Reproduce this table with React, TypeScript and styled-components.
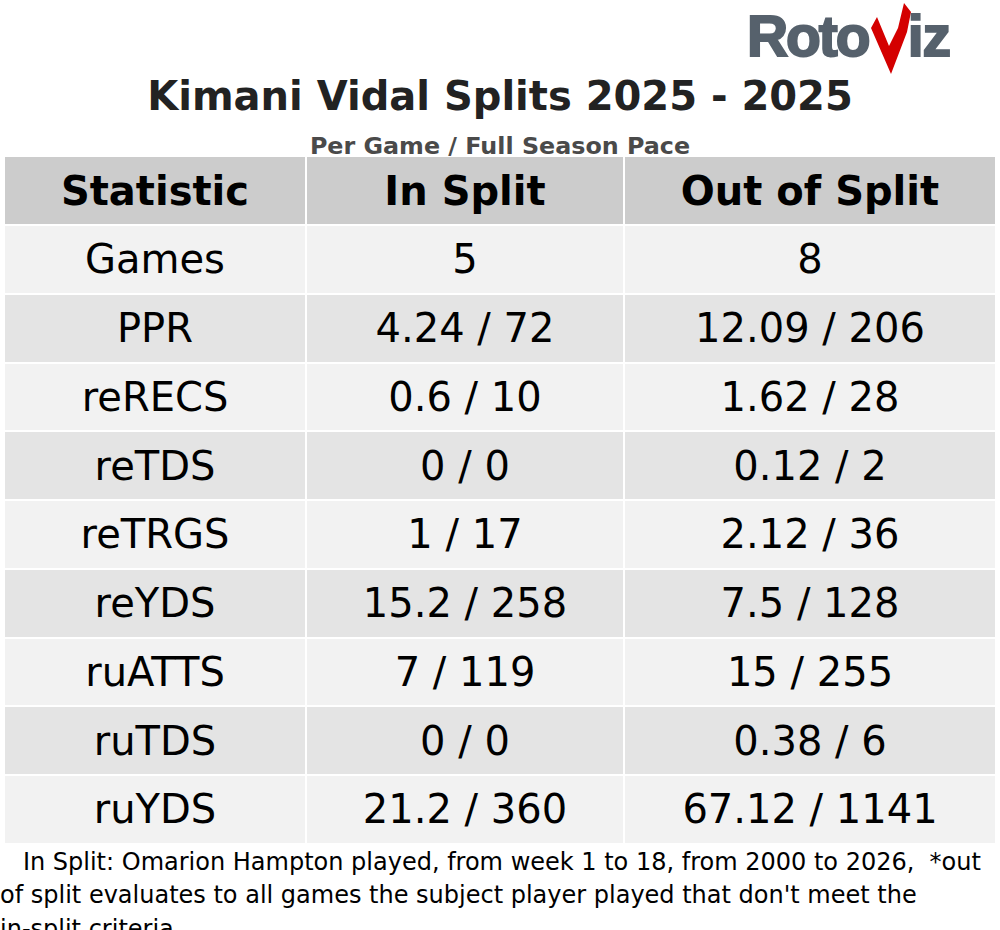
import * as React from "react";
import styled, { createGlobalStyle } from "styled-components";

const GlobalStyle = createGlobalStyle`
  html, body {
    margin: 0;
    padding: 0;
    background: #ffffff;
  }
  body {
    font-family: "DejaVu Sans", "Liberation Sans", sans-serif;
    color: #000;
  }
`;

const Page = styled.div`
  width: 1000px;
  height: 930px;
  overflow: hidden;
  display: flex;
  flex-direction: column;

  & > * {
    flex-shrink: 0;
  }
`;

const LogoRow = styled.div`
  height: 68px;
  display: flex;
  justify-content: flex-end;
  align-items: flex-start;
  padding-right: 50px;
  box-sizing: border-box;
`;

const Logo = styled.div`
  display: flex;
  align-items: flex-start;
  height: 66px;
  font-family: "Liberation Sans", Arial, sans-serif;
  font-weight: 700;
  font-size: 57px;
  line-height: 1;
  color: #56616c;
  -webkit-text-stroke: 2px #56616c;
`;

const LogoWord = styled.span<{ $spacing: number }>`
  letter-spacing: ${(p) => p.$spacing}px;
  margin-top: 8px;
`;

const Title = styled.h1`
  margin: 0;
  height: 57px;
  text-align: center;
  font-family: "DejaVu Sans", sans-serif;
  font-weight: 700;
  font-size: 40px;
  line-height: 57px;
  color: #222222;
`;

const Subtitle = styled.div`
  height: 32px;
  text-align: center;
  font-family: "DejaVu Sans", sans-serif;
  font-weight: 700;
  font-size: 23.8px;
  line-height: 42px;
  color: #4a4a4a;
`;

const Table = styled.div`
  margin: 0 5px;
  display: grid;
  grid-template-columns: 300px 316px 370px;
  grid-template-rows: 67px repeat(9, 66.75px);
  gap: 2px;
  background: #ffffff;
`;

const Cell = styled.div<{ $tone: "head" | "light" | "dark" }>`
  display: flex;
  align-items: center;
  justify-content: center;
  font-size: 40px;
  font-weight: ${(p) => (p.$tone === "head" ? 700 : 400)};
  background: ${(p) =>
    p.$tone === "head" ? "#cccccc" : p.$tone === "light" ? "#f2f2f2" : "#e4e4e4"};
  color: #000;
`;

const Footnote = styled.p`
  margin: 3px 0 0;
  width: 995px;
  white-space: pre-wrap;
  font-family: "DejaVu Sans", sans-serif;
  font-size: 24px;
  line-height: 33.5px;
  color: #000;
`;

const rows: [string, string, string][] = [
  ["Games", "5", "8"],
  ["PPR", "4.24 / 72", "12.09 / 206"],
  ["reRECS", "0.6 / 10", "1.62 / 28"],
  ["reTDS", "0 / 0", "0.12 / 2"],
  ["reTRGS", "1 / 17", "2.12 / 36"],
  ["reYDS", "15.2 / 258", "7.5 / 128"],
  ["ruATTS", "7 / 119", "15 / 255"],
  ["ruTDS", "0 / 0", "0.38 / 6"],
  ["ruYDS", "21.2 / 360", "67.12 / 1141"],
];

const VMark = () => (
  <svg width="44" height="76" viewBox="862 0 44 76" style={{ margin: "0 -3px 0 -2px" }}>
    <polygon
      points="866,28 872,17 884,46 893,28 899,3 906,12 902,32 886,74"
      fill="#d40000"
    />
  </svg>
);

export default function App() {
  return (
    <>
      <GlobalStyle />
      <Page>
        <LogoRow>
          <Logo>
            <LogoWord $spacing={-2}>Roto</LogoWord>
            <VMark />
            <LogoWord $spacing={-1}>iz</LogoWord>
          </Logo>
        </LogoRow>
        <Title>Kimani Vidal Splits 2025 - 2025</Title>
        <Subtitle>Per Game / Full Season Pace</Subtitle>
        <Table>
          <Cell $tone="head">Statistic</Cell>
          <Cell $tone="head">In Split</Cell>
          <Cell $tone="head">Out of Split</Cell>
          {rows.map((r, i) =>
            r.map((v, j) => (
              <Cell key={`${i}-${j}`} $tone={i % 2 === 0 ? "light" : "dark"}>
                {v}
              </Cell>
            ))
          )}
        </Table>
        <Footnote>
          {"   In Split: Omarion Hampton played, from week 1 to 18, from 2000 to 2026,  *out of split evaluates to all games the subject player played that don't meet the in\u2011split criteria"}
        </Footnote>
      </Page>
    </>
  );
}
